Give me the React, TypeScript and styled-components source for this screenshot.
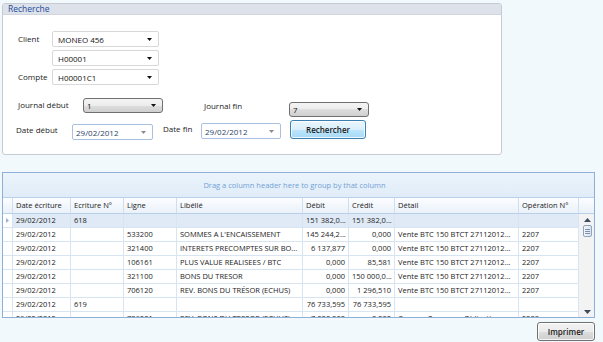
import React from 'react'
import styled, { createGlobalStyle } from 'styled-components'

const GlobalStyle = createGlobalStyle`
  html, body {
    margin: 0;
    padding: 0;
  }
  body {
    background: #f1f9fc;
    font-family: 'Open Sans', 'Noto Sans', sans-serif;
    color: #1b1b1b;
  }
`

const Page = styled.div`
  width: 603px;
  height: 342px;
  padding: 3px 0 0 2px;
  box-sizing: border-box;
  overflow: hidden;
`

const SearchPanel = styled.section`
  width: 500px;
  height: 152px;
  box-sizing: border-box;
  background: #fff;
  border: 1px solid #c6cad2;
  border-radius: 3px;
  display: flex;
  flex-direction: column;
  overflow: hidden;
`

const PanelHeader = styled.div`
  height: 10px;
  background: #dde1ea;
  border-bottom: 1px solid #d0d4dc;
  padding-left: 5px;
  font-size: 8.5px;
  line-height: 10px;
  color: #1c4a9a;
`

const Form = styled.div`
  padding-top: 16px;
  display: flex;
  flex-direction: column;
`

const AccountGrid = styled.div`
  display: grid;
  grid-template-columns: 34px 107px;
  row-gap: 3px;
  align-items: center;
  padding-left: 15px;
`

const FormRow = styled.div<{ $indent: number; $top: number }>`
  display: flex;
  align-items: flex-start;
  padding-left: ${p => p.$indent}px;
  margin-top: ${p => p.$top}px;
`

const Label = styled.span<{ $width?: number; $left?: number; $top?: number }>`
  flex: none;
  width: ${p => (p.$width ? `${p.$width}px` : 'auto')};
  margin-left: ${p => p.$left || 0}px;
  margin-top: ${p => p.$top || 0}px;
  font-size: 8px;
  line-height: 14px;
  color: #222;
  white-space: nowrap;
`

const Combo = styled.div<{ $width: number; $classic?: boolean; $top?: number }>`
  flex: none;
  width: ${p => p.$width}px;
  height: ${p => (p.$classic ? 15 : 16)}px;
  margin-top: ${p => p.$top || 0}px;
  box-sizing: border-box;
  display: flex;
  align-items: center;
  justify-content: space-between;
  padding: 0 6px 0 ${p => (p.$classic ? 3 : 5)}px;
  font-size: 8px;
  color: #111;
  border: 1px solid ${p => (p.$classic ? '#707070' : '#d8d8d8')};
  border-radius: ${p => (p.$classic ? 3 : 2)}px;
  background: ${p =>
    p.$classic
      ? 'linear-gradient(#f4f4f4, #ececec 50%, #dedede 50%, #cfcfcf)'
      : '#fff'};
`

const DatePicker = styled.div<{ $width: number; $top?: number }>`
  flex: none;
  width: ${p => p.$width}px;
  height: 16px;
  margin-top: ${p => p.$top || 0}px;
  box-sizing: border-box;
  display: flex;
  align-items: center;
  justify-content: space-between;
  padding: 0 6px 0 3px;
  font-size: 8px;
  color: #2b3f6a;
  border: 1px solid #a9c0e0;
  border-radius: 2px;
  background: #fff;
`

const Button = styled.button<{ $width: number; $primary?: boolean; $left?: number }>`
  flex: none;
  width: ${p => p.$width}px;
  height: 19px;
  margin-left: ${p => p.$left || 0}px;
  padding: 0;
  box-sizing: border-box;
  font-family: inherit;
  font-size: 8px;
  font-weight: 600;
  color: #1a1a1a;
  border: 1px solid ${p => (p.$primary ? '#3c7fb1' : '#707070')};
  border-radius: 3px;
  box-shadow: inset 0 0 0 1px rgba(255, 255, 255, 0.8);
  background: ${p =>
    p.$primary
      ? 'linear-gradient(#eaf6fd, #d9f0fc 50%, #bee6fd 50%, #a7d9f5)'
      : 'linear-gradient(#f3f3f3, #ebebeb 50%, #dddddd 50%, #cfcfcf)'};
`

const Grid = styled.div`
  margin-top: 17px;
  width: 593px;
  height: 146px;
  box-sizing: border-box;
  border: 1px solid #8eb0d8;
  background: #fff;
  display: flex;
  flex-direction: column;
`

const GroupPanel = styled.div`
  flex: none;
  height: 25px;
  box-sizing: border-box;
  border-bottom: 1px solid #b9d0ea;
  background: linear-gradient(#ebf4fc, #e0ecf8);
  display: flex;
  align-items: center;
  justify-content: center;
  font-size: 7.5px;
  color: #73a1d5;
  padding-right: 8px;
`

const columns = '10px 58px 53px 53px 126px 46px 46px 124px 60px'

const HeaderRow = styled.div`
  flex: none;
  display: grid;
  grid-template-columns: ${columns} 15px;
  height: 16px;
  box-sizing: border-box;
  border-bottom: 1px solid #b9d0ea;
  background: linear-gradient(#fcfdff, #eaf1f9);
`

const HeaderCell = styled.div`
  box-sizing: border-box;
  border-right: 1px solid #cfdff0;
  padding-left: 3px;
  font-size: 7.5px;
  line-height: 15px;
  color: #1b1b1b;
  white-space: nowrap;
  overflow: hidden;
  &:last-child {
    border-right: none;
  }
`

const Body = styled.div`
  flex: 1;
  display: flex;
  overflow: hidden;
`

const Rows = styled.div`
  width: 576px;
  flex: none;
`

const Row = styled.div<{ $selected?: boolean }>`
  display: grid;
  grid-template-columns: ${columns};
  height: 14px;
  background: ${p => (p.$selected ? '#dfeaf6' : '#fff')};
`

const Cell = styled.div<{ $right?: boolean }>`
  box-sizing: border-box;
  border-right: 1px solid #d7e5f3;
  border-bottom: 1px solid #d7e5f3;
  padding: 0 3px;
  font-size: 7.5px;
  line-height: 13px;
  text-align: ${p => (p.$right ? 'right' : 'left')};
  white-space: nowrap;
  overflow: hidden;
`

const Indicator = styled.div`
  box-sizing: border-box;
  border-right: 1px solid #d7e5f3;
  border-bottom: 1px solid #d7e5f3;
  background: #fff;
  display: flex;
  align-items: center;
  justify-content: center;
`

const ScrollBar = styled.div`
  width: 15px;
  flex: none;
  background: #f3f3f3;
  display: flex;
  flex-direction: column;
  align-items: center;
  padding: 4px 0 3px 1px;
  box-sizing: border-box;
`

const Thumb = styled.div`
  width: 9px;
  height: 12px;
  margin-top: 3px;
  box-sizing: border-box;
  border: 1px solid #8ea3c1;
  border-radius: 2px;
  background: linear-gradient(90deg, #f4f6f9, #dde3ec);
  display: flex;
  flex-direction: column;
  align-items: center;
  justify-content: center;
  gap: 1px;
  & > i {
    width: 5px;
    height: 1px;
    background: #7d8ea8;
  }
`

const Spacer = styled.div`
  flex: 1;
`

const Footer = styled.div`
  width: 593px;
  display: flex;
  justify-content: flex-end;
  margin-top: 4px;
`

const Arrow = ({ color = '#111' }: { color?: string }) => (
  <svg width="5" height="3" viewBox="0 0 5 3">
    <path d="M0 0h5L2.5 3z" fill={color} />
  </svg>
)

const ScrollArrow = ({ up }: { up?: boolean }) => (
  <svg width="7" height="4" viewBox="0 0 7 4">
    <path d={up ? 'M0 4h7L3.5 0z' : 'M0 0h7L3.5 4z'} fill="#3d4a5c" />
  </svg>
)

const RowMarker = () => (
  <svg width="3" height="5" viewBox="0 0 3 5">
    <path d="M0 0v5l3-2.5z" fill="#9bb1cf" />
  </svg>
)

interface Entry {
  date: string
  ecriture: string
  ligne: string
  libelle: string
  debit: string
  credit: string
  detail: string
  operation: string
}

const vente = 'Vente BTC 150 BTCT 27112012...'

const entries: Entry[] = [
  { date: '29/02/2012', ecriture: '618', ligne: '', libelle: '', debit: '151 382,0...', credit: '151 382,0...', detail: '', operation: '' },
  { date: '29/02/2012', ecriture: '', ligne: '533200', libelle: "SOMMES A L'ENCAISSEMENT", debit: '145 244,2...', credit: '0,000', detail: vente, operation: '2207' },
  { date: '29/02/2012', ecriture: '', ligne: '321400', libelle: 'INTERETS PRECOMPTES SUR BO...', debit: '6 137,877', credit: '0,000', detail: vente, operation: '2207' },
  { date: '29/02/2012', ecriture: '', ligne: '106161', libelle: 'PLUS VALUE REALISEES / BTC', debit: '0,000', credit: '85,581', detail: vente, operation: '2207' },
  { date: '29/02/2012', ecriture: '', ligne: '321100', libelle: 'BONS DU TRESOR', debit: '0,000', credit: '150 000,0...', detail: vente, operation: '2207' },
  { date: '29/02/2012', ecriture: '', ligne: '706120', libelle: 'REV. BONS DU TRÉSOR (ECHUS)', debit: '0,000', credit: '1 296,510', detail: vente, operation: '2207' },
  { date: '29/02/2012', ecriture: '619', ligne: '', libelle: '', debit: '76 733,595', credit: '76 733,595', detail: '', operation: '' },
  { date: '29/02/2012', ecriture: '', ligne: '706001', libelle: 'REV. BONS DU TRESOR (ECHUS)', debit: '7 000,000', credit: '0,000', detail: 'Coupon Couru sur Obligation...', operation: '2208' },
]

const headers = ['', 'Date écriture', 'Ecriture N°', 'Ligne', 'Libéllé', 'Débit', 'Crédit', 'Détail', 'Opération N°', '']

const App: React.FC = () => (
  <>
    <GlobalStyle />
    <Page>
      <SearchPanel>
        <PanelHeader>Recherche</PanelHeader>
        <Form>
          <AccountGrid>
            <Label>Client</Label>
            <Combo $width={107}>
              MONEO 456
              <Arrow />
            </Combo>
            <span />
            <Combo $width={107}>
              H00001
              <Arrow />
            </Combo>
            <Label>Compte</Label>
            <Combo $width={107}>
              H00001C1
              <Arrow />
            </Combo>
          </AccountGrid>

          <FormRow $indent={15} $top={13}>
            <Label $width={65}>Journal début</Label>
            <Combo $width={80} $classic>
              1
              <Arrow />
            </Combo>
            <Label $width={85} $left={41} $top={1}>Journal fin</Label>
            <Combo $width={80} $classic $top={4}>
              7
              <Arrow />
            </Combo>
          </FormRow>

          <FormRow $indent={13} $top={3}>
            <Label $width={56} $top={3}>Date début</Label>
            <DatePicker $width={81} $top={4}>
              29/02/2012
              <Arrow color="#8a8a8a" />
            </DatePicker>
            <Label $width={38} $left={10} $top={2}>Date fin</Label>
            <DatePicker $width={80} $top={3}>
              29/02/2012
              <Arrow color="#8a8a8a" />
            </DatePicker>
            <Button $width={76} $left={9} $primary>Rechercher</Button>
          </FormRow>
        </Form>
      </SearchPanel>

      <Grid>
        <GroupPanel>Drag a column header here to group by that column</GroupPanel>
        <HeaderRow>
          {headers.map((h, i) => (
            <HeaderCell key={i}>{h}</HeaderCell>
          ))}
        </HeaderRow>
        <Body>
          <Rows>
            {entries.map((e, i) => (
              <Row key={i} $selected={i === 0}>
                <Indicator>{i === 0 && <RowMarker />}</Indicator>
                <Cell>{e.date}</Cell>
                <Cell>{e.ecriture}</Cell>
                <Cell>{e.ligne}</Cell>
                <Cell>{e.libelle}</Cell>
                <Cell $right>{e.debit}</Cell>
                <Cell $right>{e.credit}</Cell>
                <Cell>{e.detail}</Cell>
                <Cell>{e.operation}</Cell>
              </Row>
            ))}
          </Rows>
          <ScrollBar>
            <ScrollArrow up />
            <Thumb>
              <i />
              <i />
              <i />
            </Thumb>
            <Spacer />
            <ScrollArrow />
          </ScrollBar>
        </Body>
      </Grid>

      <Footer>
        <Button $width={58}>Imprimer</Button>
      </Footer>
    </Page>
  </>
)

export default App
